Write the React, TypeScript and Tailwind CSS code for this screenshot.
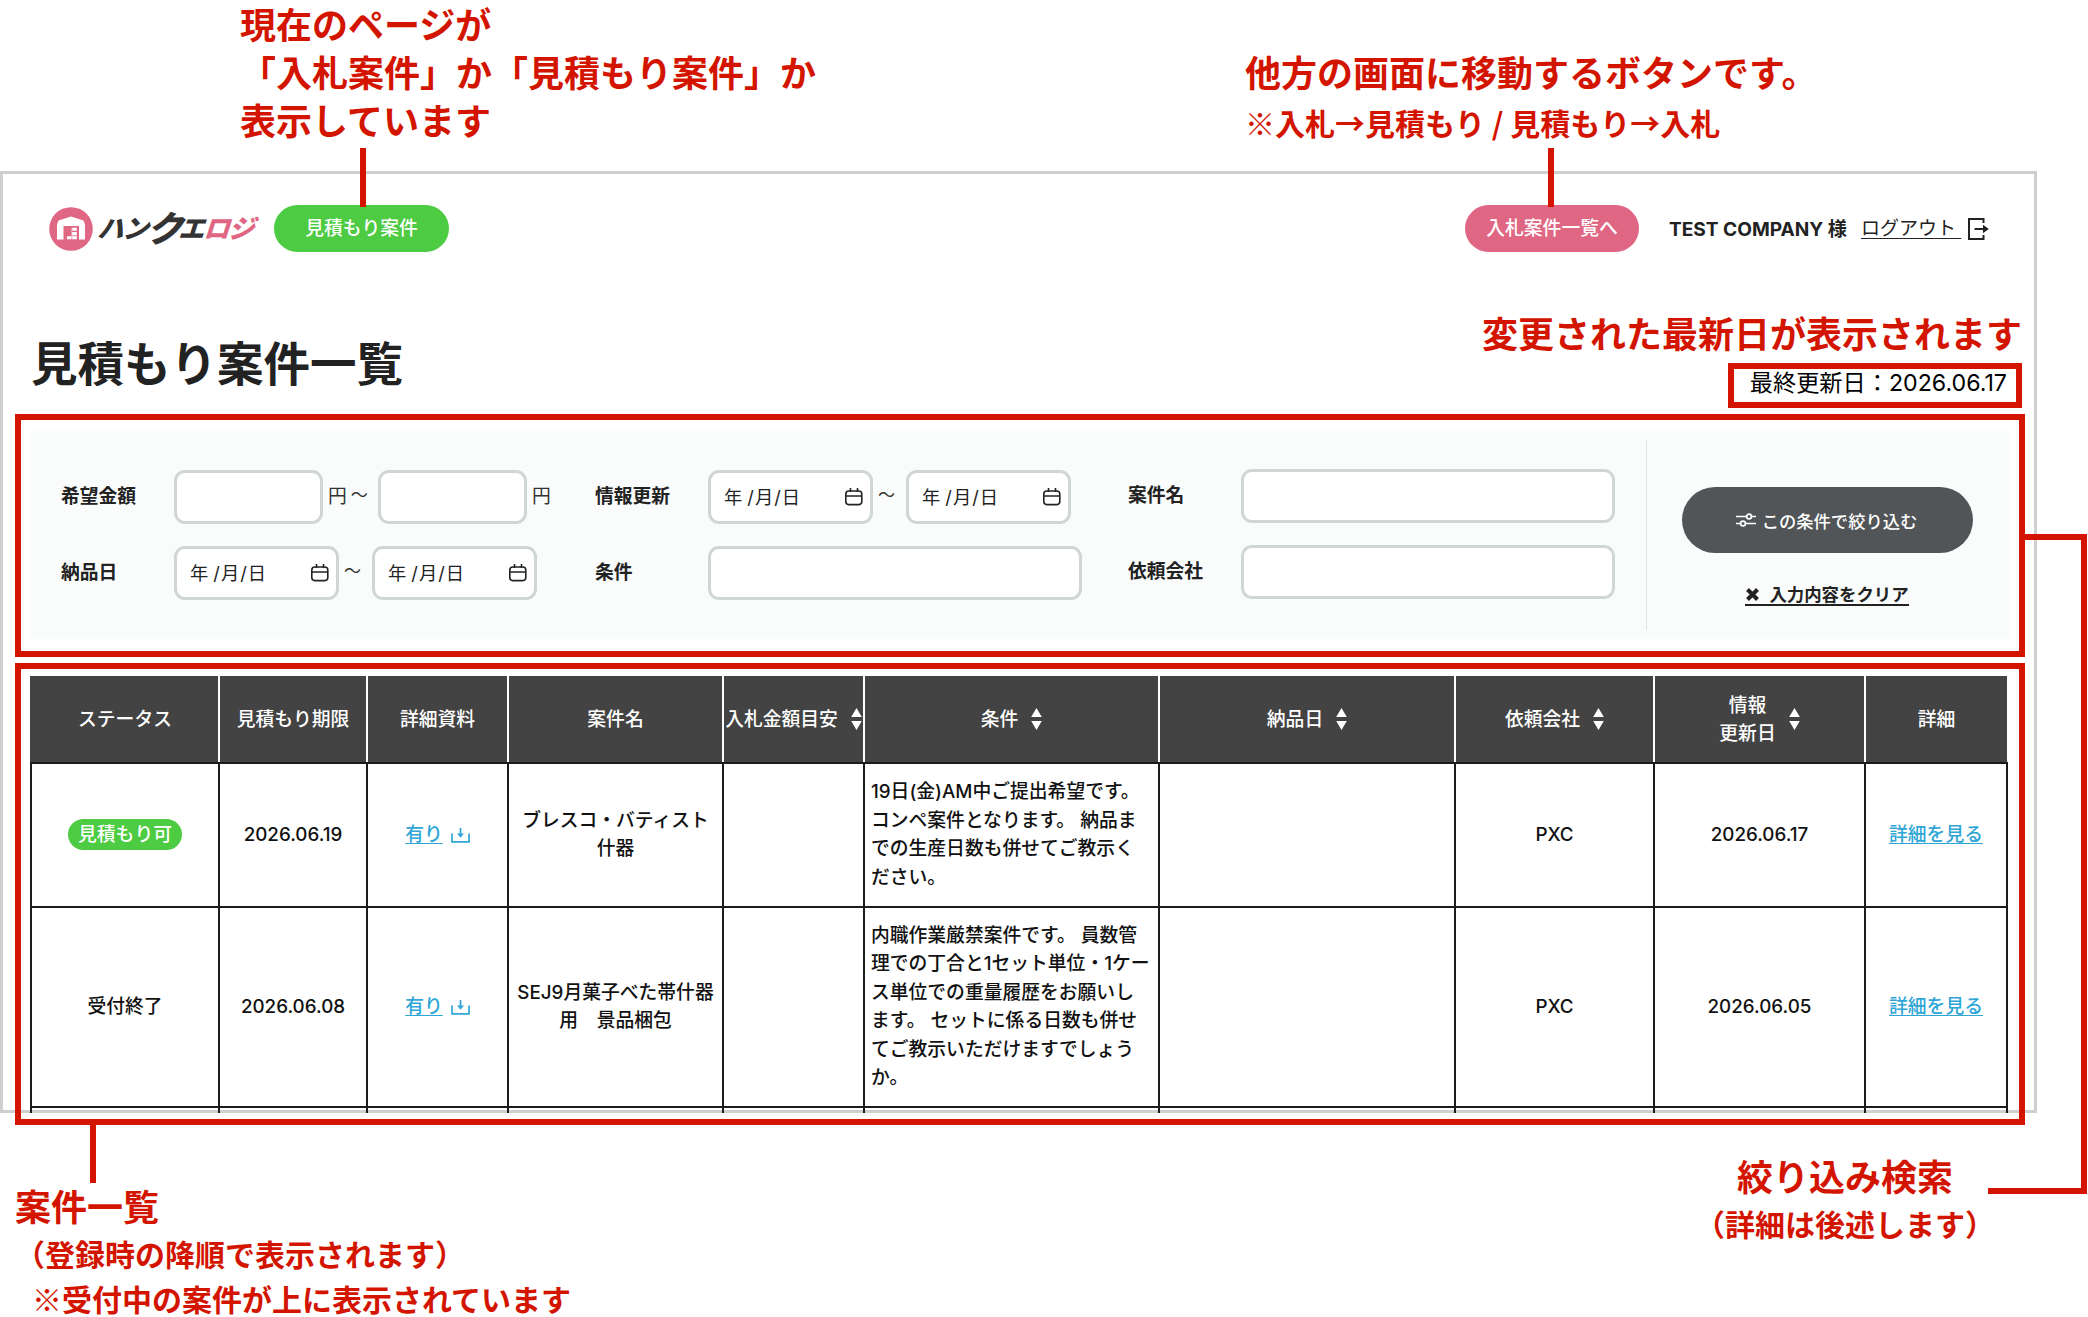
import type { ReactNode } from "react";

interface Project {
  id: string;
  open: boolean;
  deadline: string;
  name: string[];
  conditions: string[];
  company: string;
  updatedAt: string;
}

const projects: Project[] = [
  {
    id: "presco",
    open: true,
    deadline: "2026.06.19",
    name: ["ブレスコ・バティスト", "什器"],
    conditions: [
      "19日(金)AM中ご提出希望です。",
      "コンペ案件となります。 納品ま",
      "での生産日数も併せてご教示く",
      "ださい。",
    ],
    company: "PXC",
    updatedAt: "2026.06.17",
  },
  {
    id: "sej9",
    open: false,
    deadline: "2026.06.08",
    name: ["SEJ9月菓子べた帯什器", "用　景品梱包"],
    conditions: [
      "内職作業厳禁案件です。 員数管",
      "理での丁合と1セット単位・1ケー",
      "ス単位での重量履歴をお願いし",
      "ます。 セットに係る日数も併せ",
      "てご教示いただけますでしょう",
      "か。",
    ],
    company: "PXC",
    updatedAt: "2026.06.05",
  },
];

const columns = [
  { lines: ["ステータス"], sortable: false },
  { lines: ["見積もり期限"], sortable: false },
  { lines: ["詳細資料"], sortable: false },
  { lines: ["案件名"], sortable: false },
  { lines: ["入札金額目安"], sortable: true },
  { lines: ["条件"], sortable: true },
  { lines: ["納品日"], sortable: true },
  { lines: ["依頼会社"], sortable: true },
  { lines: ["情報", "更新日"], sortable: true },
  { lines: ["詳細"], sortable: false },
];

const gridCols =
  "grid grid-cols-[188px_148px_141px_215px_141px_295px_296px_199px_211px_143px]";

function Logo() {
  return (
    <div className="flex h-[47px] w-[225px] items-center">
      <svg width="44" height="44" viewBox="0 0 44 44" className="shrink-0">
        <circle cx="22" cy="22" r="21.8" fill="#df6784" />
        <path d="M8 17.5 9.5 13.5 22 9.5 34.5 13.5 36 17.5V32.5H30V19H14.5V32.5H8Z" fill="#fff" />
        <path d="M16 21H23V25.5H28V32H22V21Z" fill="#fff" opacity="0.35" />
        <path d="M23.2 20.8h4.6v3h-4.6zM23.2 25h4.6v3h-4.6zM23.2 29.3h4.6v3h-4.6zM18 29.3h4.4v3H18z" fill="#fff" />
      </svg>
      <div className="ml-[7px] flex h-[44px] -skew-x-[18deg] items-center whitespace-nowrap font-black leading-none text-[#333]">
        <span className="text-[26px] tracking-[-1px]">ハン</span>
        <span className="text-[36px] tracking-[-5px]">ク</span>
        <span className="text-[26px] tracking-[-1px]">エ</span>
        <span className="text-[26px] tracking-[-1px] text-[#df6784]">ロジ</span>
      </div>
    </div>
  );
}

function LogoutIcon() {
  return (
    <svg width="22" height="24" viewBox="0 0 22 24" fill="none" stroke="#222" strokeWidth="2">
      <path d="M16.5 6V2H2V22H16.5V18" />
      <path d="M7.5 12H18" />
      <path d="M16 7.8 21.8 12 16 16.2Z" fill="#222" stroke="none" />
    </svg>
  );
}

function CalendarIcon() {
  return (
    <svg width="20" height="20" viewBox="0 0 20 20" fill="none" stroke="#222" strokeWidth="1.6">
      <rect x="1.8" y="4" width="16" height="13.6" rx="3" />
      <path d="M2 9H18M6.5 1V5M13.5 1V5" />
    </svg>
  );
}

function FilterIcon() {
  return (
    <svg width="20" height="16" viewBox="0 0 20 16" fill="none" stroke="#fff" strokeWidth="1.7">
      <path d="M0 4.5H10.5M15.5 4.5H20M0 11.5H4.5M9.5 11.5H20" />
      <circle cx="13" cy="4.5" r="2.4" />
      <circle cx="7" cy="11.5" r="2.4" />
    </svg>
  );
}

function DownloadIcon() {
  return (
    <svg width="19" height="16" viewBox="0 0 19 16" fill="none" stroke="#2fa6d6" strokeWidth="1.7">
      <path d="M1 6.5V14.8H18V6.5" />
      <path d="M9.5 1V8" />
      <path d="M6 6.5H13L9.5 10.8Z" fill="#2fa6d6" stroke="none" />
    </svg>
  );
}

function SortIcon() {
  return (
    <svg width="11" height="22" viewBox="0 0 11 22" fill="#fff" className="shrink-0">
      <path d="M5.5 0 10.8 9H.2ZM5.5 22 .2 13H10.8Z" />
    </svg>
  );
}

function TextField({ className }: { className: string }) {
  return (
    <div className={`h-[54px] rounded-[11px] border-[3px] border-[#d0d5d5] bg-white ${className}`} />
  );
}

function DateField() {
  return (
    <div className="flex h-[54px] w-[165px] items-center justify-between rounded-[11px] border-[3px] border-[#d0d5d5] bg-white pl-[13px] pr-[6px] text-[#222]">
      <span className="flex whitespace-nowrap pt-px text-[18.3px]">
        <span className="mr-[5px]">年</span>
        <span className="mr-px">/</span>月<span className="mx-px">/</span>日
      </span>
      <CalendarIcon />
    </div>
  );
}

function DateRange() {
  return (
    <>
      <DateField />
      <span className="w-[33px] pb-0.5 pr-1.5 text-center text-[17px] text-[#333]">～</span>
      <DateField />
    </>
  );
}

function Field({ label, children }: { label: string; children: ReactNode }) {
  return (
    <div className="flex h-[54px] items-center whitespace-nowrap">
      <span className="w-[114px] shrink-0 pl-px font-bold text-[#222]">{label}</span>
      {children}
    </div>
  );
}

function FilterPanel() {
  return (
    <div className="mx-[10px] mt-[11px] flex h-[208px] bg-[#f9fcfb] pl-[29px] text-[18.8px]">
      <div className="mt-[39px] flex w-[534px] flex-col gap-[22px]">
        <Field label="希望金額">
          <TextField className="w-[149px]" />
          <span className="ml-[5px] flex w-[50px] text-[#333]">
            円<span className="ml-[4px] text-[17px]">～</span>
          </span>
          <TextField className="w-[149px]" />
          <span className="ml-[5px] text-[#333]">円</span>
        </Field>
        <Field label="納品日">
          <DateRange />
        </Field>
      </div>
      <div className="mt-[39px] flex w-[533px] flex-col gap-[22px]">
        <Field label="情報更新">
          <DateRange />
        </Field>
        <Field label="条件">
          <TextField className="w-[374px]" />
        </Field>
      </div>
      <div className="mt-[38px] flex w-[488px] flex-col gap-[22px]">
        <Field label="案件名">
          <TextField className="w-[374px]" />
        </Field>
        <Field label="依頼会社">
          <TextField className="w-[374px]" />
        </Field>
      </div>
      <div className="my-[9px] ml-[31px] border-l border-[#e0e4e4]" />
      <div className="ml-[35px] flex w-[291px] flex-col items-center pt-[56px]">
        <button className="flex h-[66px] w-[291px] items-center justify-center gap-[6px] rounded-full bg-[#515557] pr-[2px] text-[17.3px] font-medium text-white">
          <FilterIcon />
          <span className="pt-[3px]">この条件で絞り込む</span>
        </button>
        <a className="mr-px mt-[31px] flex h-[22px] items-center border-b-2 border-[#222] pl-px text-[17.4px] font-bold text-[#222]">
          <svg width="13" height="13" viewBox="0 0 13 13" stroke="#222" strokeWidth="4" className="mr-[10px]">
            <path d="M1.5 1.5 11.5 11.5M11.5 1.5 1.5 11.5" />
          </svg>
          <span className="pt-0.5">入力内容をクリア</span>
        </a>
      </div>
    </div>
  );
}

function Cell({ children, className = "justify-center" }: { children?: ReactNode; className?: string }) {
  return (
    <div className={`flex items-center whitespace-nowrap border-l-2 border-t-2 border-[#1c1c1c] ${className}`}>
      {children}
    </div>
  );
}

function ProjectRow({ project, height }: { project: Project; height: string }) {
  return (
    <div className={`${gridCols} ${height} border-r-2 border-[#1c1c1c]`}>
      <Cell>
        {project.open ? (
          <span className="mb-px flex h-[31px] w-[114px] items-center justify-center rounded-full bg-[#4dcb42] pt-px text-white">
            見積もり可
          </span>
        ) : (
          "受付終了"
        )}
      </Cell>
      <Cell>{project.deadline}</Cell>
      <Cell className="justify-center gap-2 text-[#2fa6d6]">
        <a className="underline underline-offset-2">有り</a>
        <DownloadIcon />
      </Cell>
      <Cell className="flex-col justify-center">
        {project.name.map((line) => (
          <span key={line}>{line}</span>
        ))}
      </Cell>
      <Cell />
      <Cell className="pl-[6px]">
        <div className="flex flex-col">
          {project.conditions.map((line) => (
            <span key={line}>{line}</span>
          ))}
        </div>
      </Cell>
      <Cell />
      <Cell>{project.company}</Cell>
      <Cell>{project.updatedAt}</Cell>
      <Cell className="justify-center pr-px text-[#2fa6d6]">
        <a className="underline underline-offset-2">詳細を見る</a>
      </Cell>
    </div>
  );
}

function ProjectTable() {
  return (
    <div className="ml-[9px] mt-[7px] w-[1978px] text-[18.8px] font-medium leading-[28.5px] text-[#111]">
      <div className={`${gridCols} h-[86px] w-[1977px] bg-[#434343] text-white`}>
        {columns.map((col, i) => (
          <div
            key={col.lines[0]}
            className={`flex items-center justify-center gap-[13px] whitespace-nowrap border-l-2 text-center ${
              i === 0 ? "border-[#434343]" : "border-white"
            }`}
          >
            <div className="flex flex-col pt-[2px]">
              {col.lines.map((line) => (
                <span key={line}>{line}</span>
              ))}
            </div>
            {col.sortable && <SortIcon />}
          </div>
        ))}
      </div>
      <ProjectRow project={projects[0]} height="h-[144px]" />
      <ProjectRow project={projects[1]} height="h-[200px]" />
      <div className={`${gridCols} h-[7px] border-r-2 border-[#1c1c1c]`}>
        {columns.map((col) => (
          <Cell key={col.lines[0]} />
        ))}
      </div>
    </div>
  );
}

export default function App() {
  return (
    <div className="relative h-[1317px] w-[2088px] overflow-hidden bg-white font-[Inter,'Noto_Sans_CJK_JP',sans-serif] text-[#222]">
      {/* Notes above the screen */}
      <div className="flex h-[171px] whitespace-nowrap pl-[240px] font-['Noto_Sans_CJK_JP',sans-serif] font-bold text-[#d31500]">
        <p className="-mt-px w-[1005px] text-[36px] leading-[48px]">
          現在のページが
          <br />
          「入札案件」か「見積もり案件」か
          <br />
          表示しています
        </p>
        <div className="pt-[47px]">
          <p className="text-[36px] leading-[48px]">他方の画面に移動するボタンです。</p>
          <p className="mt-[3px] text-[30px] leading-[48px]">※入札→見積もり / 見積もり→入札</p>
        </div>
      </div>

      <div className="h-[942px] w-[2037px] border-[3px] border-[#cfcfcf]">
        <header className="mt-[31px] flex h-[47px] items-center whitespace-nowrap pl-[46px] text-[18.8px]">
          <Logo />
          <span className="flex h-[47px] w-[175px] items-center justify-center rounded-full bg-[#4dcb42] pt-px font-medium text-white">
            見積もり案件
          </span>
          <a className="ml-[1016px] flex h-[47px] w-[174px] items-center justify-center rounded-full bg-[#df6784] pt-px font-medium text-white">
            入札案件一覧へ
          </a>
          <span className="ml-[30px] w-[192px] pt-[2px] text-[19.1px] font-bold">TEST COMPANY 様</span>
          <a className="flex items-center gap-[6px]">
            <span className="whitespace-pre pt-px text-[19px] underline underline-offset-[3px]">{"ログアウト "}</span>
            <LogoutIcon />
          </a>
        </header>

        <div className="flex h-[162px] justify-between whitespace-nowrap pl-[28px] pr-3">
          <h1 className="mt-[82px] text-[46.5px] font-bold leading-[60px]">見積もり案件一覧</h1>
          <div className="flex flex-col items-end pt-[56px]">
            <p className="font-['Noto_Sans_CJK_JP',sans-serif] text-[36px] font-bold leading-[48px] text-[#d31500]">
              変更された最新日が表示されます
            </p>
            <p className="mt-[7px] flex h-[45px] w-[294px] items-center justify-end border-[6px] border-[#d31500] pb-[4px] pr-[9px] text-[23.2px] text-black">
              最終更新日：2026.06.17
            </p>
          </div>
        </div>

        <section className="ml-3 h-[243px] w-[2010px] border-[6px] border-[#d31500]">
          <FilterPanel />
        </section>

        <section className="ml-3 mt-[6px] h-[462px] w-[2010px] border-[6px] border-[#d31500]">
          <ProjectTable />
        </section>
      </div>

      {/* Notes below the screen */}
      <div className="flex justify-between whitespace-nowrap pl-[15px] pt-[68px] font-['Noto_Sans_CJK_JP',sans-serif] font-bold text-[#d31500]">
        <div>
          <p className="text-[36px] leading-[48px]">案件一覧</p>
          <p className="pt-px text-[30px] leading-[46px]">（登録時の降順で表示されます）</p>
          <p className="-mt-px pl-[17px] text-[30px] leading-[46px]">※受付中の案件が上に表示されています</p>
        </div>
        <div className="-mt-[30px] w-[393px]">
          <p className="pl-[42px] text-[36px] leading-[48px]">絞り込み検索</p>
          <p className="pt-px text-[30px] leading-[46px]">（詳細は後述します）</p>
        </div>
      </div>

      {/* Leader lines from the notes */}
      <div className="absolute left-[360px] top-[148px] h-[59px] w-[6px] bg-[#d31500]" />
      <div className="absolute left-[1548px] top-[148px] h-[59px] w-[6px] bg-[#d31500]" />
      <div className="absolute left-[90px] top-[1125px] h-[58px] w-[6px] bg-[#d31500]" />
      <div className="absolute left-[2025px] top-[534px] h-[6px] w-[62px] bg-[#d31500]" />
      <div className="absolute left-[2081px] top-[534px] h-[660px] w-[6px] bg-[#d31500]" />
      <div className="absolute left-[1988px] top-[1188px] h-[6px] w-[99px] bg-[#d31500]" />
    </div>
  );
}
